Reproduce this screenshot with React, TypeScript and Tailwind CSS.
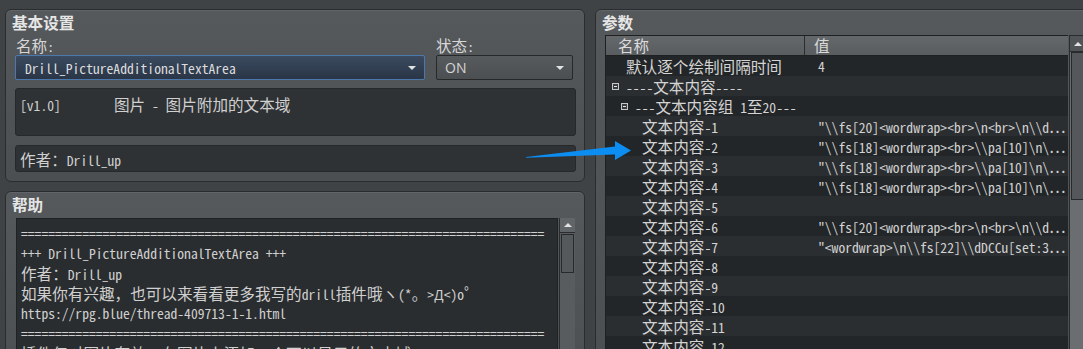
import type { ReactNode } from "react"

// split text into CJK runs and latin runs, the app draws them with different fonts
const SPLIT = /([\u2e80-\u9fff\uff00-\uffef\u22ef]+)/

function T({ s }: { s: string }) {
  const parts = s.split(SPLIT)
  return (
    <>
      {parts.map((p, i) =>
        p === "" ? null : i % 2 === 1 ? (
          <span key={i} className="font-['Noto_Sans_CJK_SC',sans-serif] text-[15.6px]">
            {p}
          </span>
        ) : (
          <span key={i} className="font-['Noto_Sans_Mono_CJK_SC','DejaVu_Sans_Mono',monospace] text-[13.6px]">
            {p}
          </span>
        )
      )}
    </>
  )
}

const Panel = ({ title, className, children }: { title: string; className: string; children: ReactNode }) => (
  <div className={`shrink-0 rounded-[6px] border border-[#2a2d2f] bg-linear-to-b from-[#56595c] to-[#4c4f52] shadow-[inset_0_1px_0_#626568] ${className}`}>
    <div className="pt-[3px] pl-[6px] h-[21px] leading-[18px] font-bold text-[#e6e6e6] whitespace-pre">
      <T s={title} />
    </div>
    {children}
  </div>
)

const DownArrow = () => <span className="w-0 h-0 border-x-[4px] border-x-transparent border-t-[4px] border-t-[#e2e2e2]" />
const UpArrow = () => <span className="w-0 h-0 border-x-[4px] border-x-transparent border-b-[4px] border-b-[#e2e2e2]" />

const eq = "=".repeat(77)
const helpLines = [
  eq,
  "+++ Drill_PictureAdditionalTextArea +++",
  "作者：Drill_up",
  "如果你有兴趣，也可以来看看更多我写的drill插件哦ヽ(*。>Д<)o゜",
  "https://rpg.blue/thread-409713-1-1.html",
  eq,
  "插件仅对图片有效，在图片上添加一个可以显示的文本域。",
]

const v20 = "\"\\\\fs[20]<wordwrap><br>\\n<br>\\n\\\\d⋯"
const v18 = "\"\\\\fs[18]<wordwrap><br>\\\\pa[10]\\n\\⋯"

type Row = { name: string; value?: string; pl: number; toggle?: boolean }
const rows: Row[] = [
  { name: "默认逐个绘制间隔时间", value: "4", pl: 20 },
  { name: "----文本内容----", pl: 6, toggle: true },
  { name: "---文本内容组 1至20---", pl: 15, toggle: true },
  { name: "文本内容-1", value: v20, pl: 36 },
  { name: "文本内容-2", value: v18, pl: 36 },
  { name: "文本内容-3", value: v18, pl: 36 },
  { name: "文本内容-4", value: v18, pl: 36 },
  { name: "文本内容-5", pl: 36 },
  { name: "文本内容-6", value: v20, pl: 36 },
  { name: "文本内容-7", value: "\"<wordwrap>\\n\\\\fs[22]\\\\dDCCu[set:3⋯", pl: 36 },
  { name: "文本内容-8", pl: 36 },
  { name: "文本内容-9", pl: 36 },
  { name: "文本内容-10", pl: 36 },
  { name: "文本内容-11", pl: 36 },
  { name: "文本内容-12", pl: 36 },
]

export default function App() {
  return (
    <div className="relative w-[1083px] h-[349px] overflow-hidden bg-[#404346] flex gap-[10px] pl-[5px] pt-[9px] text-[#d2d2d2]">
      <div className="w-[580px] shrink-0 flex flex-col gap-[9px]">
        <Panel title="基本设置" className="h-[173px]">
          <div className="px-[9px]">
            <div className="flex gap-[11px] mt-[5px]">
              <div className="w-[410px]">
                <div className="h-[18px] leading-[18px] pl-[1px] text-[#d6d6d6]">
                  <T s="名称:" />
                </div>
                <div className="mt-[1px] h-[25px] rounded-[2px] border border-[#4c79ad] bg-linear-to-b from-[#3b4a5f] to-[#2a3647] flex items-center justify-between pl-[9px] pr-[8px] leading-[20px] text-[#dcdcdc]">
                  <span className="whitespace-pre">
                    <T s="Drill_PictureAdditionalTextArea" />
                  </span>
                  <DownArrow />
                </div>
              </div>
              <div className="w-[137px]">
                <div className="h-[18px] leading-[18px] text-[#d6d6d6]">
                  <T s="状态:" />
                </div>
                <div className="mt-[1px] h-[25px] rounded-[2px] border border-[#26282a] bg-linear-to-b from-[#585b5e] to-[#4c4f52] flex items-center justify-between pl-[8px] pr-[8px] font-['Open_Sans',sans-serif] text-[14px] text-[#d4d4d4]">
                  <span>ON</span>
                  <DownArrow />
                </div>
              </div>
            </div>
            <div className="mt-[8px] w-[561px] h-[48px] rounded-[3px] border border-[#26282a] bg-[#2f3235] pl-[4px] pt-[5px] leading-[20px] whitespace-pre text-[#d0d0d0]">
              <div className="h-[20px]">
                <span className="inline-block w-[94px]">
                  <T s="[v1.0]" />
                </span>
                <T s="图片 - 图片附加的文本域" />
              </div>
            </div>
            <div className="mt-[9px] w-[561px] h-[27px] rounded-[3px] border border-[#26282a] bg-[#2f3235] pl-[4px] pt-[3px] leading-[20px] whitespace-pre text-[#d0d0d0]">
              <div className="h-[20px]">
                <T s="作者：Drill_up" />
              </div>
            </div>
          </div>
        </Panel>

        <Panel title="帮助" className="h-[200px]">
          <div className="mt-[5px] pl-[10px] flex gap-[1px]">
            <div className="w-[542px] h-[160px] border border-[#1f2123] bg-[#2a2d2f] pl-[4px] pt-[4px] leading-[20px] whitespace-pre text-[#d0d0d0] overflow-hidden">
              {helpLines.map((l, i) => (
                <div key={i} className="h-[20px]">
                  <T s={l} />
                </div>
              ))}
            </div>
            <div className="w-[16px] h-[160px] bg-[#595c5f] border-l border-[#2a2c2e]">
              <div className="h-[15px] bg-[#626568] border-b border-[#2a2c2e] flex items-center justify-center">
                <UpArrow />
              </div>
              <div className="mt-[1px] ml-[1px] w-[13px] h-[39px] border border-[#27292b] bg-[#56595c]" />
            </div>
          </div>
        </Panel>
      </div>

      <Panel title="参数" className="w-[500px] h-[360px]">
        <div className="mt-[4px] ml-[9px] flex">
          <div className="w-[463px] border-l border-[#1e2022] bg-[#232628]">
            <div className="h-[21px] flex border-y border-[#1e2022] bg-linear-to-b from-[#65686b] to-[#5a5d60] leading-[19px] text-[#dadada]">
              <div className="w-[199px] border-r border-[#2a2d2f] pl-[12px]">
                <T s="名称" />
              </div>
              <div className="pl-[9px]">
                <T s="值" />
              </div>
            </div>
            {rows.map((r, i) => (
              <div key={i} className={`h-[20px] flex leading-[20px] whitespace-pre ${i % 2 === 0 ? "bg-[#232628]" : "bg-[#2b2e31]"}`}>
                <div className="w-[200px] flex items-center text-[#d4d4d4]" style={{ paddingLeft: r.pl }}>
                  {r.toggle && (
                    <span className="w-[7px] h-[7px] border border-[#c6c6c6] bg-[#3a3d40] mr-[7px] flex items-center justify-center">
                      <span className="w-[3px] h-[1px] bg-[#e0e0e0]" />
                    </span>
                  )}
                  <span>
                    <T s={r.name} />
                  </span>
                </div>
                <div className="pl-[12px] text-[#d2d2d2]">{r.value && <T s={r.value} />}</div>
              </div>
            ))}
          </div>
          <div className="ml-[1px] w-[16px] bg-[#6b6e71] border-l border-[#2a2c2e]">
            <div className="h-[17px] bg-[#515457] border-y border-[#2a2c2e] flex items-center justify-center">
              <UpArrow />
            </div>
            <div className="ml-[1px] w-[14px] h-[148px] border border-[#27292b] bg-[#55585b]" />
          </div>
        </div>
      </Panel>

      <svg className="absolute left-0 top-0 pointer-events-none" width="1083" height="349">
        <polygon points="526,157 615,146.5 615,141 631,150.5 615,160 615,154.5 526,157.8" fill="#0c8df2" />
      </svg>
    </div>
  )
}
